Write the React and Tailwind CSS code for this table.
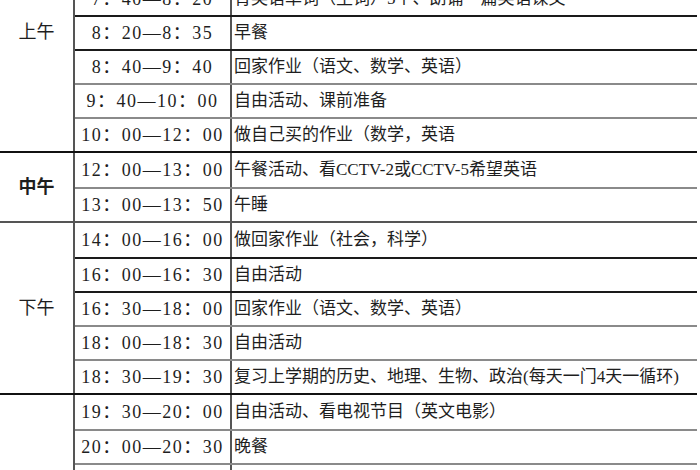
const dark = "border-t-2 border-[#1a1a1a]";
const gray = "border-t-2 border-[#8a8a8a]";

const groups = [
    {
        label: "上午",
        bold: false,
        top: "border-t-2 border-[#1a1a1a]",
        rows: [
            ["6：40—7：00", "起床、洗漱", dark],
            ["7：00—7：40", "晨练、早读", dark],
            ["7：40—8：20", "背英语单词（生词）5个、朗诵一篇英语课文", dark],
            ["8：20—8：35", "早餐", dark],
            ["8：40—9：40", "回家作业（语文、数学、英语）", dark],
            ["9：40—10：00", "自由活动、课前准备", gray],
            ["10：00—12：00", "做自己买的作业（数学，英语", gray],
        ],
    },
    {
        label: "中午",
        bold: true,
        top: "border-t-2 border-[#111]",
        rows: [
            ["12：00—13：00", "午餐活动、看CCTV-2或CCTV-5希望英语", gray],
            ["13：00—13：50", "午睡", gray],
        ],
    },
    {
        label: "下午",
        bold: false,
        top: "border-t-2 border-[#555]",
        rows: [
            ["14：00—16：00", "做回家作业（社会，科学）", gray],
            ["16：00—16：30", "自由活动", dark],
            ["16：30—18：00", "回家作业（语文、数学、英语）", dark],
            ["18：00—18：30", "自由活动", gray],
            ["18：30—19：30", "复习上学期的历史、地理、生物、政治(每天一门4天一循环)", gray],
        ],
    },
    {
        label: "晚上",
        bold: false,
        top: "border-t-2 border-[#111]",
        rows: [
            ["19：30—20：00", "自由活动、看电视节目（英文电影）", gray],
            ["20：00—20：30", "晚餐", gray],
            ["20：30—21：00", "自由活动（洗漱、洗澡）", gray],
            ["21：00—21：30", "阅读课外书", gray],
            ["21：30—22：00", "整理书包", gray],
            ["22：00", "睡觉", gray],
        ],
    },
];

const Row = ({ time, text, border, first }) => (
    <div className={`flex h-[34px] items-center ${first ? "" : border}`}>
        <div className="w-[157px] h-full flex items-center justify-center border-r-2 border-[#555] text-[18px] tracking-[1.5px]">
            {time}
        </div>
        <div className="flex-1 pl-[2px] text-[17px] whitespace-nowrap">{text}</div>
    </div>
);

export default function App() {
    return (
        <div className="w-[700px] h-[470px] overflow-hidden bg-white text-[#1e1e1e] font-[family-name:'Liberation_Serif','Noto_Sans_CJK_SC',serif]">
            <div className="w-[697px] -mt-[89px]">
                {groups.map(group => (
                    <div key={group.label} className={`flex ${group.top}`}>
                        <div className={`w-[73px] flex items-center justify-center text-[18px] ${group.bold ? "font-semibold" : ""}`}>
                            {group.label}
                        </div>
                        <div className="flex-1 flex flex-col border-l-2 border-[#555]">
                            {group.rows.map((row, i) => (
                                <Row key={row[0]} time={row[0]} text={row[1]} border={row[2]} first={i === 0} />
                            ))}
                        </div>
                    </div>
                ))}
            </div>
        </div>
    );
}
